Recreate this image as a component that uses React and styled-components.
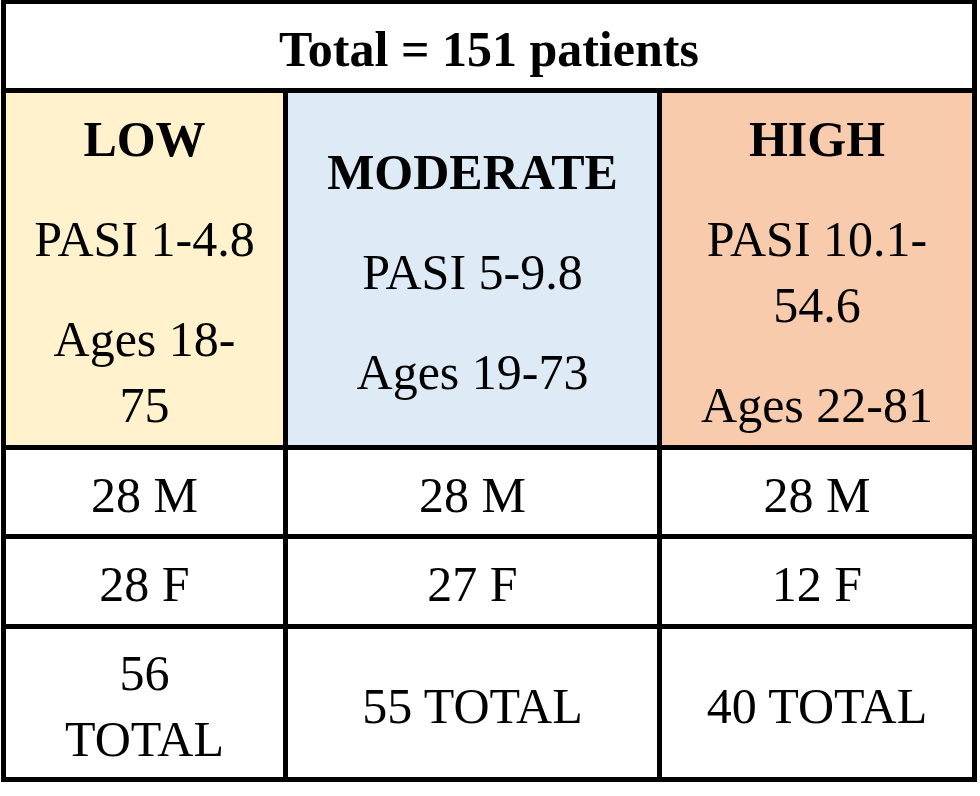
import React from "react";
import styled, { createGlobalStyle } from "styled-components";

const GlobalStyle = createGlobalStyle`
  html, body {
    margin: 0;
    padding: 0;
    background: #fff;
  }
  body {
    font-family: "Liberation Serif", "Times New Roman", serif;
    color: #000;
  }
`;

const groups = [
  {
    color: "#fff2cc",
    title: "LOW",
    lines: [["PASI 1-4.8"], ["Ages 18-", "75"]],
    male: "28 M",
    female: "28 F",
    total: ["56", "TOTAL"],
  },
  {
    color: "#deeaf6",
    title: "MODERATE",
    lines: [["PASI 5-9.8"], ["Ages 19-73"]],
    male: "28 M",
    female: "27 F",
    total: ["55 TOTAL"],
  },
  {
    color: "#f8cbad",
    title: "HIGH",
    lines: [["PASI 10.1-", "54.6"], ["Ages 22-81"]],
    male: "28 M",
    female: "12 F",
    total: ["40 TOTAL"],
  },
];

const App = () => {
  return (
    <>
      <GlobalStyle />
      <Table>
        <Cell $span>
          <Para $bold>Total = 151 patients</Para>
        </Cell>

        {groups.map((g) => (
          <Cell key={g.title} $bg={g.color}>
            <Para $bold>{g.title}</Para>
            {g.lines.map((p, i) => (
              <Para key={i}>
                {p.map((line, j) => (
                  <React.Fragment key={j}>
                    {j > 0 && <br />}
                    {line}
                  </React.Fragment>
                ))}
              </Para>
            ))}
          </Cell>
        ))}

        {groups.map((g) => (
          <Cell key={g.title + "m"}>
            <Para>{g.male}</Para>
          </Cell>
        ))}

        {groups.map((g) => (
          <Cell key={g.title + "f"}>
            <Para>{g.female}</Para>
          </Cell>
        ))}

        {groups.map((g) => (
          <Cell key={g.title + "t"}>
            <Para>
              {g.total.map((line, j) => (
                <React.Fragment key={j}>
                  {j > 0 && <br />}
                  {line}
                </React.Fragment>
              ))}
            </Para>
          </Cell>
        ))}
      </Table>
    </>
  );
};

// the black background showing through the gaps draws the grid lines
const Table = styled.div`
  display: grid;
  grid-template-columns: 277px 369px 310px;
  grid-template-rows: 84px 352px 84px 85px 148px;
  gap: 5px;
  padding: 4px 5px 5px 5px;
  margin-left: 1px;
  width: max-content;
  background-color: #000;
`;

const Cell = styled.div`
  grid-column: ${(p) => (p.$span ? "1 / -1" : "auto")};
  background-color: ${(p) => p.$bg || "#fff"};
  display: flex;
  flex-direction: column;
  align-items: center;
  justify-content: center;
  text-align: center;
  padding-top: 5px;
  box-sizing: border-box;
  overflow: hidden;
`;

const Para = styled.p`
  margin: 0;
  font-size: 50px;
  line-height: 66px;
  font-weight: ${(p) => (p.$bold ? 700 : 400)};
  white-space: nowrap;

  & + & {
    margin-top: 34px;
  }
`;

export default App;
